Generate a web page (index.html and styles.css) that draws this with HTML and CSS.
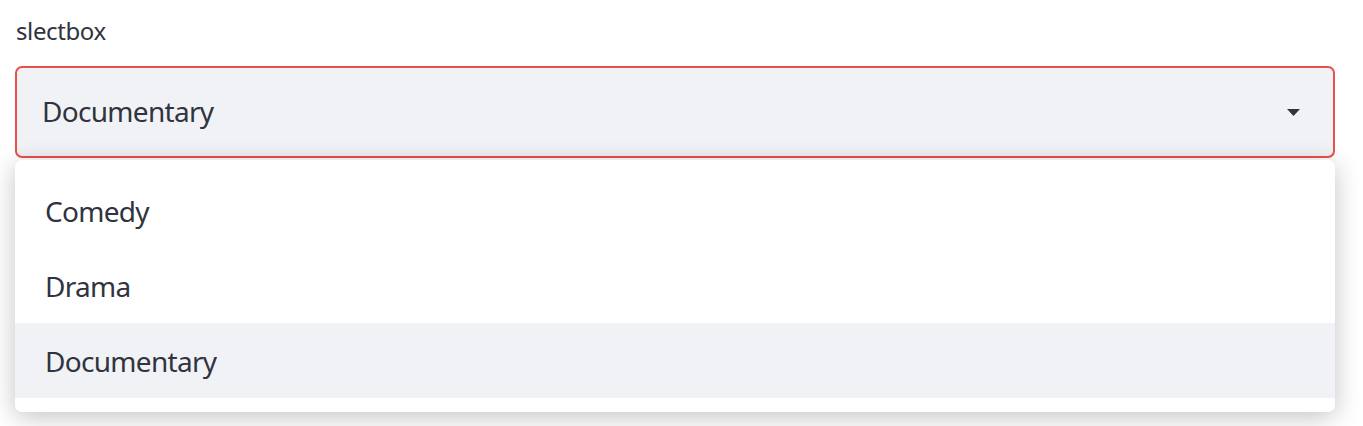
FILE: index.html
```html
<!DOCTYPE html>
<html>
<head>
<meta charset="utf-8">
<link rel="stylesheet" href="styles.css">
</head>
<body>
<div class="widget">
  <div class="label">slectbox</div>
  <div class="select">
    <span class="value">Documentary</span>
    <svg class="caret" width="13" height="7" viewBox="0 0 13 7"><path d="M0 0 H13 L6.5 7 Z" fill="#31333f"/></svg>
  </div>
  <div class="dropdown">
    <div class="option">Comedy</div>
    <div class="option">Drama</div>
    <div class="option active">Documentary</div>
  </div>
</div>
</body>
</html>
```
FILE: styles.css
```css
html, body {
  margin: 0;
  padding: 0;
  background: #ffffff;
}
body {
  font-family: "Source Sans Pro", "Noto Sans", sans-serif;
  color: #31333f;
}
.widget {
  padding: 14px 28px 14px 15px;
  display: flex;
  flex-direction: column;
}
.label {
  font-size: 24px;
  line-height: 34px;
  padding-left: 1px;
  letter-spacing: -0.4px;
  margin-bottom: 18px;
}
.select {
  box-sizing: border-box;
  height: 92px;
  border: 2px solid #e9504b;
  border-radius: 7px;
  background: #f0f2f6;
  display: flex;
  align-items: center;
  justify-content: space-between;
  padding: 0 33px 0 25px;
}
.value {
  font-size: 28px;
  letter-spacing: -0.7px;
  padding-bottom: 2px;
}
.caret {
  display: block;
}
.dropdown {
  margin-top: 2px;
  padding: 13px 0 14px;
  background: #ffffff;
  border-radius: 7px;
  box-shadow: 0 5px 26px rgba(0, 0, 0, 0.24);
  display: flex;
  flex-direction: column;
}
.option {
  height: 75px;
  display: flex;
  align-items: center;
  padding-left: 30px;
  font-size: 28px;
  letter-spacing: -0.7px;
}
.option.active {
  background: #f0f2f6;
}
```
